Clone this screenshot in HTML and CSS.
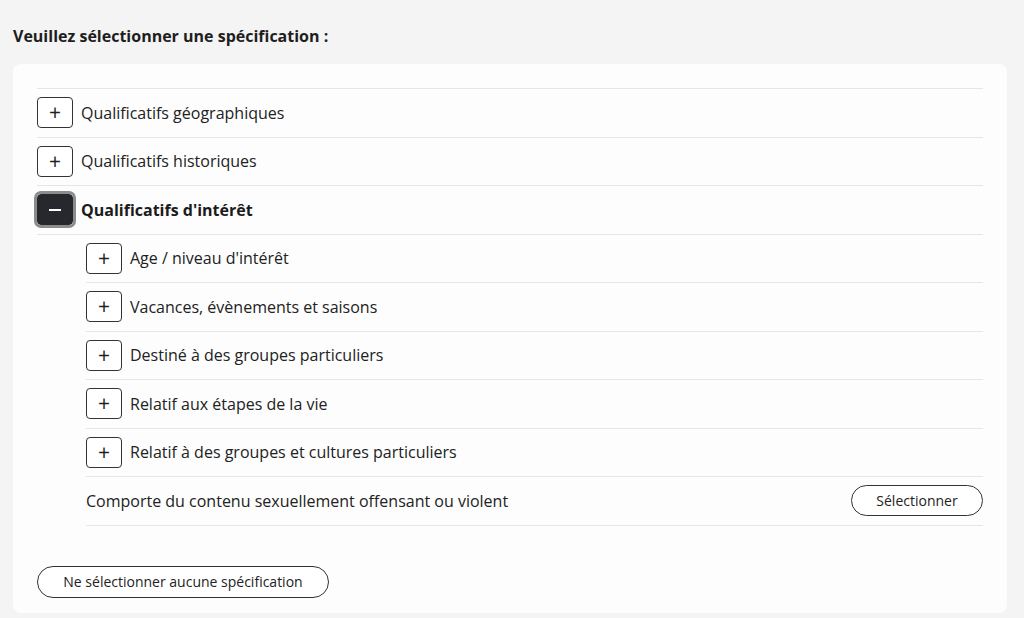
FILE: index.html
```html
<!DOCTYPE html>
<html lang="fr">
<head>
<meta charset="utf-8">
<link rel="stylesheet" href="styles.css">
</head>
<body>
<div class="page">
  <h2 class="title">Veuillez sélectionner une spécification :</h2>
  <div class="card">
    <ul class="tree">
      <li class="row"><span class="toggle">+</span><span class="label">Qualificatifs géographiques</span></li>
      <li class="row"><span class="toggle">+</span><span class="label">Qualificatifs historiques</span></li>
      <li class="group">
        <div class="row"><span class="toggle open"><span class="dash"></span></span><span class="label bold">Qualificatifs d'intérêt</span></div>
        <ul class="sub">
          <li class="row"><span class="toggle">+</span><span class="label">Age / niveau d'intérêt</span></li>
          <li class="row"><span class="toggle">+</span><span class="label">Vacances, évènements et saisons</span></li>
          <li class="row"><span class="toggle">+</span><span class="label">Destiné à des groupes particuliers</span></li>
          <li class="row"><span class="toggle">+</span><span class="label">Relatif aux étapes de la vie</span></li>
          <li class="row"><span class="toggle">+</span><span class="label">Relatif à des groupes et cultures particuliers</span></li>
          <li class="row leaf"><span class="label">Comporte du contenu sexuellement offensant ou violent</span><button class="pill small">Sélectionner</button></li>
        </ul>
      </li>
    </ul>
    <button class="pill none">Ne sélectionner aucune spécification</button>
  </div>
</div>
</body>
</html>
```
FILE: styles.css
```css
* { box-sizing: border-box; }
html, body { margin: 0; padding: 0; }
body {
  background: #f4f4f4;
  font-family: "Open Sans", "Noto Sans", sans-serif;
  color: #222;
  width: 1024px;
  height: 618px;
  overflow: hidden;
}
.page {
  padding: 26px 17px 0 13px;
}
.title {
  margin: 0 0 17px 0;
  font-size: 16px;
  font-weight: 700;
  line-height: 21px;
  color: #1e1e1e;
}
.card {
  background: #fdfdfd;
  border-radius: 8px;
  padding: 24px 24px 16px 24px;
  height: 549px;
}
ul { list-style: none; margin: 0; padding: 0; }
.tree {
  border-top: 1px solid #e6e6e6;
}
.row {
  display: flex;
  align-items: center;
  height: 48.5px;
  border-bottom: 1px solid #e6e6e6;
}
.sub {
  margin-left: 49px;
}
.toggle {
  width: 36px;
  height: 31px;
  border: 1px solid #333;
  border-radius: 4px;
  display: flex;
  align-items: center;
  justify-content: center;
  font-size: 21px;
  font-weight: 400;
  line-height: 1;
  color: #222;
  margin-right: 8px;
  flex: none;
  background: #fff;
}
.toggle.open {
  background: #26282d;
  border-color: #26282d;
  outline: 3px solid #8c8c8c;
  outline-offset: 0;
}
.dash {
  display: block;
  width: 12px;
  height: 1.5px;
  background: #fff;
}
.label {
  font-size: 16px;
  line-height: 22px;
  color: #222;
}
.label.bold { font-weight: 700; color: #1b1b1b; }
.leaf { justify-content: space-between; }
.pill {
  font-family: "Open Sans", "Noto Sans", sans-serif;
  background: #fff;
  border: 1px solid #333;
  border-radius: 16px;
  color: #222;
  font-size: 14px;
  line-height: 18px;
  cursor: pointer;
}
.pill.small {
  width: 132px;
  height: 31px;
  margin-right: 0;
}
.pill.none {
  margin-top: 40px;
  width: 292px;
  height: 32px;
}
```
